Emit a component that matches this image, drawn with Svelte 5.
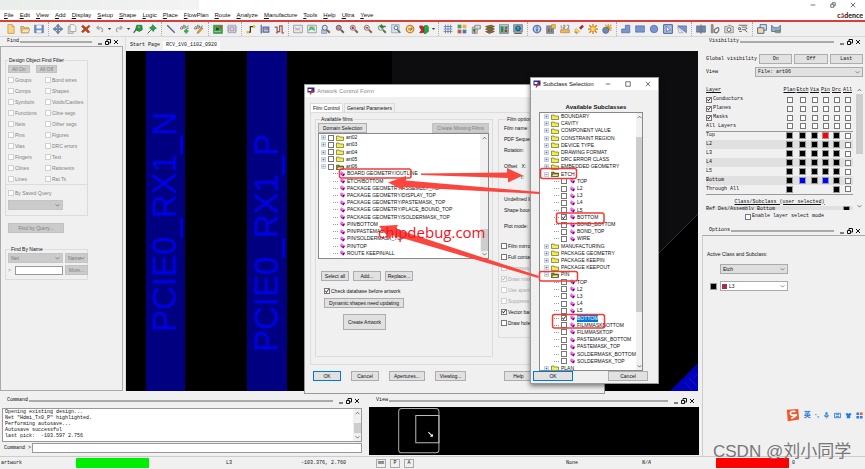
<script lang="ts">
	// Board editor workspace: docked panels round a board canvas,
	// with the artwork form and the subclass picker floating on top.

	type Shape = [d: string, fill: string, stroke?: string, width?: number];

	const menus = [
		'File', 'Edit', 'View', 'Add', 'Display', 'Setup', 'Shape', 'Logic', 'Place', 'FlowPlan',
		'Route', 'Analyze', 'Manufacture', 'Tools', 'Help', 'Ultra', 'Yeve',
	];

	const lens = 'M2 6a4 4 0 1 0 8 0a4 4 0 1 0-8 0';
	const handle = 'M9.500 9.500l4.500 4.500';

	// All icons live on a 16x16 grid.
	const icons: Record<string, Shape[]> = {
		new: [['M3 1h7l3 3v11H3z', '#f8d489', '#b88432'], ['M10 1v3h3', '#fff', '#b88432']],
		open: [['M1 4h5l1 2h7v8H2z', '#eec073', '#ac7a38'], ['M4 8h12l-3 6H2z', '#fde6b4', '#b48244']],
		save: [['M1 2h14v12H1z', '#7490c8', '#46659c'], ['M4 2h8v5H4zM4 10h8v4H4z', '#f4f7fc', 'none']],
		move: [['M8 0l3 4H9v3h3V5l4 3-4 3V9H9v3h2l-3 4-3-4h2V9H4v2L0 8l4-3v2h3V4H5z', '#6d8fb5', '#4f6f91']],
		copy: [['M2 4h8v11H2z', '#ddd', '#888'], ['M5 1h6l3 3v8H5z', '#f6f6f6', '#888']],
		delete: [['M3 2l5 4 5-4 1 2-4 4 4 5-3 1-4-4-4 4-2-2 4-4-4-4z', '#c4461c', '#8b3013']],
		undo: [['M6 3L3 6l4 3M3 6h6q4 1 3 5l-2 2', 'none', '#aaa', 2]],
		redo: [['M10 3l3 3-4 3M13 6H7q-4 1-3 5l2 2', 'none', '#aaa', 2]],
		ball: [['M6 2h8l1 7-5 3-6-3z', '#259b42', '#126428'], ['M5 9l-4 5', 'none', '#555', 2], ['M8 4h3v2H8z', '#7ce07f']],
		pin: [['M9 1l6 6-3 1-2 4-6-6 4-2z', '#2aa14c', '#1b7235'], ['M6 10l-5 5', 'none', '#555', 1.500]],
		line: [['M2 2l12 12', 'none', '#4d5c91', 2]],
		textAdd: [['M1 6q3-5 3 0v2H1V6M6 1v6q4 0 3-4H6M14 3q-4 0-3 4h3', 'none', '#444', 1], ['M10 8v7M6.500 11.500h7', 'none', '#36a74b', 3]],
		textEdit: [['M1 6q3-5 3 0v2H1V6M6 1v6q4 0 3-4H6M14 3q-4 0-3 4h3', 'none', '#444', 1], ['M14 7l-6 7-3 1 1-3 5-6z', '#eda43e', '#9d6321']],
		place: [['M1 2h14v13H1z', '#40aa4a', '#22772d'], ['M5 6h4v4H5z', '#333'], ['M10 3h4v4h-4z', '#d84335'], ['M2 12h11', 'none', '#aee3ac']],
		chip: [['M2 2h12v12H2z', '#cfdded', '#7187a5'], ['M5 5h6v6H5z', '#f2c9c9', '#a86f76'], ['M0 5h2M0 8h2M0 11h2M14 5h2M14 8h2M14 11h2', 'none', '#7187a5']],
		route: [['M3 13h4V4h6', 'none', '#333', 2], ['M1 11h4v4H1zM11 2h4v4h-4z', '#e7bb34']],
		slide: [['M2 1v14M5 5h9v8H5z', '#b8c6df', '#526ba3', 2], ['M7 8h6', 'none', '#bb5458', 2]],
		delay: [['M1 5h4v7h4V3h4v11h3', 'none', '#9c5959', 2], ['M3 14h4', 'none', '#777', 2]],
		unrats: [['M1 2h14v12H1z', '#eee', '#667896'], ['M3 5l9 7M4 11l8-6M3 8h9', 'none', '#c48f8f']],
		rats: [['M1 2h14v12H1z', '#e7f1e5', '#667896'], ['M3 11l4-6 5 6M4 5h8M3 8h10', 'none', '#3c9e50', 1.500]],
		zoomBox: [['M1 9h8v6H1z', '#b5c6df', '#6782af'], [lens, '#d8e5f5', '#50607c', 1.500], [handle, 'none', '#845c48', 3]],
		zoomFit: [[lens, '#b78c9c', '#7c5268', 1.500], [handle, 'none', '#665555', 3]],
		zoomIn: [[lens, '#efdbe2', '#777', 1.500], [handle, 'none', '#845c48', 3], ['M6 4v4M4 6h4', 'none', '#b72338', 2]],
		zoomOut: [[lens, '#f4e1e4', '#777', 1.500], [handle, 'none', '#845c48', 3], ['M4 6h4', 'none', '#b72338', 2]],
		zoomPrev: [[lens, '#d9ecdb', '#779077', 1.500], [handle, 'none', '#6a6358', 3], ['M14 4H6l2-3M6 4l3 3', 'none', '#258339', 2.500]],
		zoomPage: [['M1 1h12v13H1z', '#d4e2ee', '#7896b0'], ['M5 6a3 3 0 1 0 6 0a3 3 0 1 0-6 0', '#f4faff', '#4d6e8b', 1.500], ['M10 9l5 5', 'none', '#555', 2]],
		refresh: [['M2 8a6 6 0 1 0 12 0a6 6 0 1 0-12 0', '#f7d8a0', '#c77f27', 2], ['M5 8h6V5M11 8l-3 3', 'none', '#a25b16', 1.500]],
		view3d: [['M1 3h4l3 2v8l-3 1H1l3-4-2-3z', '#cf2128', '#8b1018'], ['M8 3l5-1 2 3v7l-4 3H8z', '#29a447', '#13742c']],
		grid: [['M1 4h14M1 8h14M1 12h14M4 1v14M8 1v14M12 1v14', 'none', '#7488b3', 1.500]],
		colors: [['M1 1h6v6H1z', '#43a355'], ['M9 1h6v6H9z', '#e6b54a'], ['M1 9h6v6H1z', '#c75a46'], ['M9 9h6v6H9z', '#4f78b4']],
		shadow: [['M2 5h8v10H2z', '#c7d5e5', '#666'], ['M6 2h9v6H6z', '#d4d4d4', '#666'], ['M3 8h4v3H3z', '#258d38'], ['M4 11h3v3H4z', '#b8352d']],
		layers: [['M1 12l9-2 5 2-8 3zM1 8l9-2 5 2-8 3zM1 4l9-2 5 2-8 3z', '#4d8b49', '#8b4c32', 1.500]],
		board: [['M1 1h14v14H1z', '#9baebd', '#526578'], ['M3 4h4v9H3zM10 4h3v4h-3z', '#2a8c3d'], ['M9 9h4v4H9z', '#a83b30'], ['M2 2h12', 'none', '#eee']],
		globe: [['M1 1h14v12H1z', '#93a5bd', '#53657c'], ['M4 7a4 4 0 1 0 8 0a4 4 0 1 0-8 0', '#236f9c', '#174e76'], ['M6 5h4l-2 4z', '#54bb65'], ['M2 15h12', 'none', '#666', 2]],
		info: [['M2 8a6 6 0 1 0 12 0a6 6 0 1 0-12 0', '#b5c8ea', '#5c75a6', 2], ['M8 4v2M8 7v5', 'none', '#385692', 2]],
		property: [['M1 3h11v12H1z', '#8398ae', '#566878'], ['M9 1h6v6H9z', '#f5c341', '#b28124'], ['M3 7h3v6H3z', '#ba4c43'], ['M8 8h2v5H8z', '#308d44']],
		measure: [['M1 9h14v5H1z', '#edb663', '#b87a2f'], ['M2 2v5M5 2h3v3H5v2h3M11 2h3v5h-3', 'none', '#555']],
		highlight: [['M8 6l5-5 3 3-5 5z', '#9b3440'], ['M4 7l5 5-3 2-5-5z', '#f9de6c', '#c69a31'], ['M1 12l4 3', 'none', '#ad7d35', 2]],
		sun: [['M8 0v16M0 8h16M2 2l12 12M14 2L2 14', 'none', '#d27a25', 2], ['M4 8a4 4 0 1 0 8 0a4 4 0 1 0-8 0', '#fcda54', '#c48a25']],
		shade: [['M10 0v12M4 6h12M5 1l10 10M15 1L5 11', 'none', '#e39a28', 2], ['M1 10a5 5 0 1 0 10 0a5 5 0 1 0-10 0', '#7187ac', '#455d83']],
		poly: [['M7 2h7v12H1V8h6z', '#7997ce', '#405f9a']],
		rect: [['M1 3h14v10H1z', '#7997ce', '#405f9a']],
		circle: [['M2 8a6 6 0 1 0 12 0a6 6 0 1 0-12 0', '#7997ce', '#405f9a']],
		select: [['M1 1h14v14H1z', '#a7bbdf', '#405f9a', 1.500], ['M5 3l7 7-4 0-2 3z', '#fff', '#405f9a']],
		voidShape: [['M1 3h14v11z', '#7997ce', '#405f9a'], ['M1 5l9 9H3z', '#eee', '#999']],
		mirror: [['M1 3h5v10H1zM10 3h5v10h-5z', '#708bb8', '#435d8a'], ['M8 1v14', 'none', '#444', 2]],
		spin: [['M2 1h3v13H2z', '#999', '#666'], ['M7 9q8-7 7 1-2 6-7 3z', 'none', '#777', 2]],
		camera: [['M1 4h4l2-2h4l1 2h3v10H1z', '#d3d3d3', '#777'], ['M5 9a3 3 0 1 0 6 0a3 3 0 1 0-6 0', '#fff', '#666', 1.500]],
		netlist: [['M1 2h14M6 5h8M6 9h4M10 9l5-2M10 9l5 4M1 6h3v3H1zM2 12h4', 'none', '#666', 1.500]],
		cascade: [['M5 1h10v9H5z', '#dbe5f4', '#48659a', 1.500], ['M1 6h10v9H1z', '#f3d896', '#48659a', 1.500]],
		compare: [['M1 2v10h14V2l-4 4H5z', '#9cb0d2', '#58749d', 1.500], ['M7 10h8v4H7z', '#65a96d', '#777']],
	};

	// 'caret' is the small arrow beside a split button.
	const toolGroups = [
		['new', 'open', 'save'],
		['move', 'copy', 'delete', 'undo', 'caret', 'redo', 'caret', 'ball', 'pin'],
		['line', 'textAdd', 'textEdit'],
		['place', 'chip'],
		['route', 'slide', 'delay'],
		['unrats', 'rats', 'zoomBox', 'zoomFit', 'zoomIn', 'zoomOut', 'zoomPrev', 'zoomPage', 'refresh', 'view3d', 'caret'],
		['grid', 'colors', 'shadow', 'layers', 'board', 'globe'],
		['info', 'property', 'measure', 'highlight', 'sun', 'shade'],
		['poly', 'rect', 'circle', 'select', 'voidShape'],
		['mirror', 'spin', 'camera', 'netlist'],
		['cascade', 'compare'],
	];

	const findTypes = [
		'Groups', 'Bond wires', 'Comps', 'Shapes', 'Symbols', 'Voids/Cavities', 'Functions', 'Cline segs',
		'Nets', 'Other segs', 'Pins', 'Figures', 'Vias', 'DRC errors', 'Fingers', 'Text',
		'Clines', 'Ratsnests', 'Lines', 'Rat Ts',
	];

	const films = ['art02', 'art03', 'art04', 'art05', 'art06'];
	const filmItems = [
		'BOARD GEOMETRY/OUTLINE', 'ETCH/BOTTOM', 'PACKAGE GEOMETRY/ASSEMBLY_TOP',
		'PACKAGE GEOMETRY/DISPLAY_TOP', 'PACKAGE GEOMETRY/PASTEMASK_TOP',
		'PACKAGE GEOMETRY/PLACE_BOUND_TOP', 'PACKAGE GEOMETRY/SOLDERMASK_TOP', 'PIN/BOTTOM',
		'PIN/PASTEMASK_TOP', 'PIN/SOLDERMASK_TOP', 'PIN/TOP', 'ROUTE KEEPIN/ALL',
	];

	const classes = [
		{ name: 'BOUNDARY' }, { name: 'CAVITY' }, { name: 'COMPONENT VALUE' }, { name: 'CONSTRAINT REGION' },
		{ name: 'DEVICE TYPE' }, { name: 'DRAWING FORMAT' }, { name: 'DRC ERROR CLASS' }, { name: 'EMBEDDED GEOMETRY' },
		{ name: 'ETCH', subs: ['TOP', 'L2', 'L3', 'L4', 'L5', 'BOTTOM', 'BOND_BOTTOM', 'BOND_TOP', 'WIRE'] },
		{ name: 'MANUFACTURING' }, { name: 'PACKAGE GEOMETRY' }, { name: 'PACKAGE KEEPIN' }, { name: 'PACKAGE KEEPOUT' },
		{
			name: 'PIN',
			subs: [
				'TOP', 'L2', 'L3', 'L4', 'L5', 'BOTTOM', 'FILMMASKBOTTOM', 'FILMMASKTOP',
				'PASTEMASK_BOTTOM', 'PASTEMASK_TOP', 'SOLDERMASK_BOTTOM', 'SOLDERMASK_TOP',
			],
		},
		{ name: 'PLAN' },
	];

	const filmChecks = [
		{ label: 'Film mirrored' },
		{ label: 'Full contact thermal-reliefs' },
		{ label: 'Suppress unconnected pads', off: true },
		{ label: 'Draw missing pad apertures', on: true, off: true },
		{ label: 'Use aperture rotation', off: true },
		{ label: 'Suppress shape fill', off: true },
		{ label: 'Vector based pad behavior', on: true },
		{ label: 'Draw holes only' },
	];

	const columns = ['Plan', 'Etch', 'Via', 'Pin', 'Drc', 'All'];
	const k = 'black';
	const layers = [
		{ name: 'Top', cells: [k, k, k, 'red', k] },
		{ name: 'L2', cells: [k, k, k, k, k] },
		{ name: 'L3', cells: [k, k, k, k, k] },
		{ name: 'L4', cells: [k, k, k, k, k] },
		{ name: 'L5', cells: [k, k, k, k, k] },
		{ name: 'Bottom', cells: [k, 'blue', k, 'blue', k] },
		{ name: 'Through All', cells: [k, '', '', '', k] },
	];
</script>

{#snippet dockTitle(name: string)}
	<header class="dock-title">
		<span>{name}</span><i class="rule"></i>
		<button aria-label="Minimize {name}"><svg viewBox="0 0 6 6"><path d="M1 5h4" /></svg></button>
		<button aria-label="Float {name}"><svg viewBox="0 0 6 6"><path d="M2 2V0.500h3.500V4H4M0.500 2.500h3v3h-3z" /></svg></button>
		<button aria-label="Close {name}"><svg viewBox="0 0 6 6"><path d="M1 1l4 4M5 1L1 5" /></svg></button>
	</header>
{/snippet}

{#snippet appIcon()}
	<svg class="app-icon" viewBox="0 0 16 16">
		<path d="M1 1h14v10H1z" fill="#20308c" />
		<path d="M3 4h6v4H3z" fill="#fff" />
		<path d="M5 15l3-8 6-3-3 4 3 2-5 2-1 3z" fill="#d9232c" />
	</svg>
{/snippet}

{#snippet expander(open: boolean)}
	<svg class="expander" viewBox="0 0 10 10">
		<path d="M1 1h8v8H1z" fill="#e7edf8" stroke="#98a6c0" />
		<path d={open ? 'M3 5h4' : 'M3 5h4M5 3v4'} stroke="#334d90" fill="none" />
	</svg>
{/snippet}

{#snippet folder(open: boolean)}
	<svg class="folder" viewBox="0 0 16 12">
		<path d="M1 2h5l1 2h8v7H1z" fill={open ? '#8a8a20' : '#f4ef4c'} stroke="#333300" />
		{#if open}<path d="M4 6h11.500l-2.500 5H1z" fill="#f4ef8c" stroke="#222" />{/if}
	</svg>
{/snippet}

{#snippet gem()}
	<svg class="gem" viewBox="0 0 10 12">
		<path d="M3 1l6 4v3L6 11 1 7V3z" fill="#c71fc9" />
		<path d="M3 1l6 4-3 2-5-3z" fill="#ef7df0" />
		<path d="M6 7v4l3-3V5z" fill="#541056" />
	</svg>
{/snippet}

<div class="app">
	<div class="titlebar">
		<i class="tint"></i>
		<div class="window-buttons">
			<button aria-label="Minimize"><svg viewBox="0 0 8 8"><path d="M1 4h6" /></svg></button>
			<button aria-label="Restore"><svg viewBox="0 0 8 8"><path d="M3 3V1h4v4H5M1 3h4v4H1z" /></svg></button>
			<button aria-label="Close"><svg viewBox="0 0 8 8"><path d="M1 1l6 6M7 1L1 7" /></svg></button>
		</div>
	</div>
	<nav class="menubar">
		{#each menus as menu}
			<button><u>{menu[0]}</u>{menu.slice(1)}</button>
		{/each}
		<strong class="brand">c<em>ā</em>dence</strong>
	</nav>

	<div class="toolbar">
		{#each toolGroups as group}
			<div class="tool-group">
				{#each group as name}
					{#if name === 'caret'}
						<button class="caret" aria-label="More"></button>
					{:else}
						<button class="tool" aria-label={name}>
							<svg viewBox="0 0 16 16">
								{#each icons[name] as [d, fill, stroke, width]}
									<path {d} {fill} stroke={stroke ?? 'none'} stroke-width={width ?? 1} />
								{/each}
							</svg>
						</button>
					{/if}
				{/each}
			</div>
		{/each}
	</div>

	<main class="workspace">
		<div class="center">
			<div class="upper">
				<section class="find">
					{@render dockTitle('Find')}
					<div class="find-body">
						<fieldset class="filter">
							<legend>Design Object Find Filter</legend>
							<div class="row"><button class="btn gray" disabled>All On</button><button class="btn gray" disabled>All Off</button></div>
							<div class="types">
								{#each findTypes as type}
									<label><input type="checkbox" disabled />{type}</label>
								{/each}
							</div>
							<div class="saved">
								<label><input type="checkbox" disabled />By Saved Query</label>
								<select class="gray wide" aria-label="Saved query" disabled><option></option></select>
							</div>
						</fieldset>
						<button class="btn gray query" disabled>Find by Query...</button>
						<fieldset class="by-name">
							<legend>Find By Name</legend>
							<select class="gray" aria-label="Object kind" disabled><option>Net</option></select>
							<select class="gray" aria-label="Match by" disabled><option>Name</option></select>
							<label class="name-input">&gt;<input type="text" disabled /></label>
							<button class="btn gray" disabled>More...</button>
						</fieldset>
					</div>
				</section>

				<section class="editor">
					<div class="tabs">
						<button>Start Page</button>
						<button class="active">RCV_1V0_1102_0920</button>
					</div>
					<svg class="board" viewBox="0 0 572 340" preserveAspectRatio="xMinYMin slice">
						<path d="M0 0h572v340H0z" fill="#000" />
						<path d="M266 0H572V163L480 255H266z" fill="#0d0c0f" />
						<path d="M572 163L480 255" stroke="#333" />
						<path d="M20 0h39v340H20zM121 0h40v340h-40z" fill="#000080" />
						<path d="M572 312v28h-28z" fill="#0000b4" />
						<path d="M559 331l7 8M563 327l8 8M567 327l5-4" stroke="#1010ff" />
						<text transform="translate(50 281) rotate(-90)">PCIE0_RX1_N</text>
						<text transform="translate(152 301) rotate(-90)">PCIE0_RX1_P</text>
					</svg>
				</section>
			</div>

			<div class="lower">
				<section class="command">
					{@render dockTitle('Command')}
					<div class="log">
						<pre>Opening existing design...
Net "Hdmi_Tx0_P" highlighted.
Performing autosave...
Autosave successful
last pick:  -103.597 2.756</pre>
						<i class="scroll log-scroll"></i>
					</div>
					<label class="prompt">Command &gt;<input type="text" /></label>
				</section>
				<section class="world">
					{@render dockTitle('View')}
					<svg class="overview" viewBox="0 0 328 48" preserveAspectRatio="xMinYMin slice">
						<path d="M0 0h328v48H0z" fill="#000" />
						<rect x="29.500" y="1.500" width="40" height="44" rx="3" fill="none" stroke="#aaa" />
						<path d="M46.500 8.500h23v27h-23z" fill="none" stroke="#bbb" />
						<path d="M59 25l4 4m0-2v2h-2" fill="none" stroke="#fff" />
					</svg>
				</section>
			</div>
		</div>

		<aside class="dock">
			<section>
				{@render dockTitle('Visibility')}
				<div class="visibility">
					<div class="vis-row">
						<span>Global visibility</span>
						<button class="btn">On</button><button class="btn">Off</button><button class="btn">Last</button>
					</div>
					<div class="vis-row view-row">
						<label for="view-file">View</label>
						<select id="view-file"><option>File: art06</option></select>
					</div>
					<div class="layer-area">
						<div class="layer-list">
							<table>
								<thead>
									<tr><th>Layer</th>{#each columns as column}<th>{column}</th>{/each}</tr>
								</thead>
								<tbody>
									{#each ['Conductors', 'Planes', 'Masks', 'All Layers'] as name}
										<tr>
											<td>
												{#if name === 'All Layers'}{name}{:else}
													<label><input type="checkbox" checked />{name}</label>
												{/if}
											</td>
											{#each columns as column}
												<td><input type="checkbox" aria-label="{name} {column}" /></td>
											{/each}
										</tr>
									{/each}
								</tbody>
								<tbody class="stack">
									{#each layers as layer}
										<tr>
											<td>{layer.name}</td>
											{#each layer.cells as cell}
												<td>{#if cell}<i class="swatch {cell}"></i>{/if}</td>
											{/each}
											<td><input type="checkbox" aria-label="{layer.name} all" /></td>
										</tr>
									{/each}
								</tbody>
							</table>
							<p class="class-title">Class/Subclass (user selected)</p>
							<p class="class-row">Ref Des/Assembly_Bottom<i class="swatch black"></i></p>
						</div>
						<i class="scroll layer-scroll"></i>
					</div>
					<label class="enable"><input type="checkbox" />Enable layer select mode</label>
				</div>
			</section>
			<section class="options">
				{@render dockTitle('Options')}
				<div class="options-body">
					<p>Active Class and Subclass:</p>
					<select class="gray" aria-label="Active class"><option>Etch</option></select>
					<div class="subclass">
						<i class="swatch black"></i>
						<span class="chosen"><i></i><select aria-label="Active subclass"><option>L3</option></select></span>
					</div>
				</div>
			</section>
		</aside>
	</main>

	<footer class="status">
		<span>artwork</span>
		<i class="busy"></i>
		<span>L3</span>
		<span>-103.376, 2.760</span>
		<span class="keys"><button>mm</button><button>P</button><button>A</button></span>
		<span>None</span>
		<span class="na">N/A</span>
		<i class="drc"></i>
		<span>0</span>
	</footer>

	<div class="window artwork" role="dialog" aria-label="Artwork Control Form">
		<div class="window-title">{@render appIcon()}<span>Artwork Control Form</span></div>
		<div class="artwork-body">
			<div class="form-tabs"><button class="active">Film Control</button><button>General Parameters</button></div>
			<div class="form-page">
				<fieldset class="films">
					<legend>Available films</legend>
					<div class="row spread">
						<button class="btn">Domain Selection</button>
						<button class="btn gray" disabled>Create Missing Films</button>
					</div>
					<div class="tree film-tree">
						<ul>
							{#each films as film}
								<li>
									{@render expander(film === 'art06')}
									<input type="checkbox" aria-label={film} />
									{@render folder(film === 'art06')}<span>{film}</span>
								</li>
							{/each}
							{#each filmItems as item}
								<li class="leaf"><i class="branch"></i>{@render gem()}<span>{item}</span></li>
							{/each}
						</ul>
						<i class="scroll film-scroll"></i>
					</div>
					<div class="row actions">
						<button class="btn">Select all</button><button class="btn">Add...</button><button class="btn">Replace...</button>
					</div>
					<label class="check-db"><input type="checkbox" checked />Check database before artwork</label>
					<button class="btn dynamic">Dynamic shapes need updating</button>
					<button class="btn create">Create Artwork</button>
				</fieldset>
				<fieldset class="film-options">
					<legend>Film options</legend>
					<p>Film name:</p>
					<p>PDF Sequence:</p>
					<p>Rotation:</p>
					<p class="apart">Offset&nbsp;&nbsp; X:</p>
					<p class="indent">Y:</p>
					<p class="apart next">Undefined line width:</p>
					<p>Shape bounding box:</p>
					<p class="apart">Plot mode:</p>
					<div class="film-checks">
						{#each filmChecks as check}
							<label class:off={check.off}><input type="checkbox" checked={check.on} disabled={check.off} />{check.label}</label>
						{/each}
					</div>
				</fieldset>
			</div>
			<div class="row form-footer">
				<button class="btn primary">OK</button><button class="btn">Cancel</button>
				<button class="btn">Apertures...</button><button class="btn">Viewlog...</button>
				<button class="btn help">Help</button>
			</div>
		</div>
	</div>

	<div class="window picker" role="dialog" aria-label="Subclass Selection">
		<div class="window-title">
			{@render appIcon()}<span>Subclass Selection</span>
			<div class="window-buttons">
				<button aria-label="Minimize"><svg viewBox="0 0 8 8"><path d="M1 4h6" /></svg></button>
				<button aria-label="Maximize"><svg viewBox="0 0 8 8"><path d="M1 1h6v6H1z" /></svg></button>
				<button aria-label="Close"><svg viewBox="0 0 8 8"><path d="M1 1l6 6M7 1L1 7" /></svg></button>
			</div>
		</div>
		<div class="picker-body">
			<h2>Available Subclasses</h2>
			<div class="tree class-tree">
				<ul>
					{#each classes as cls}
						<li>{@render expander(!!cls.subs)}{@render folder(!!cls.subs)}<span>{cls.name}</span></li>
						{#each cls.subs ?? [] as sub}
							<li class="leaf">
								<i class="branch"></i>
								<input type="checkbox" class="tick" aria-label="{cls.name} {sub}" checked={sub === 'BOTTOM'} />
								{@render gem()}
								<span class:selected={cls.name === 'PIN' && sub === 'BOTTOM'}>{sub}</span>
							</li>
						{/each}
					{/each}
				</ul>
				<i class="scroll class-scroll"></i>
			</div>
			<div class="row spread"><button class="btn primary">OK</button><button class="btn">Cancel</button></div>
		</div>
	</div>

	<div class="ime">
		<svg viewBox="0 0 16 16"><path d="M1 2l13-1 1 12-13 2z" fill="#f2572c" /><path d="M11 4q-6-1-6 2t5 2-4 4" fill="none" stroke="#fff" stroke-width="2" /></svg>
		<span>英</span><span>·,</span>
		<svg viewBox="0 0 16 16"><path d="M6 1h4v8H6zM3 7q0 5 5 5t5-5M8 12v4" fill="#2a7be0" fill-opacity="0.800" stroke="#2a7be0" /></svg>
		<svg viewBox="0 0 16 16"><path d="M1 3h14v10H1zM4 6h8M4 10h8" fill="none" stroke="#2a7be0" stroke-width="2" /></svg>
		<svg viewBox="0 0 16 16"><path d="M1 4l4-2 3 2 3-2 4 2-2 4-1-1v7H4V7L3 8z" fill="#2a7be0" /></svg>
		<svg viewBox="0 0 16 16"><path d="M1 1h6v6H1zM1 9h6v6H1zM9 9h6v6H9z" fill="#2a7be0" /><path d="M9 1h6v6H9z" fill="#f2572c" /></svg>
	</div>

	<!-- Hand-drawn notes linking the films to their subclasses -->
	<svg class="notes" width="865" height="469" viewBox="0 0 865 469">
		<g fill="none" stroke="#f23a35" stroke-width="1.500">
			<rect x="339.500" y="169" width="71.500" height="9" rx="2" />
			<rect x="540.500" y="168.500" width="36" height="10" rx="2" />
			<rect x="556.500" y="213" width="47.500" height="10.500" rx="2" />
			<rect x="539.500" y="271.500" width="38" height="9.500" rx="2" />
			<rect x="552.500" y="314.500" width="52" height="13.500" rx="2" />
		</g>
		<g fill="#fb4640">
			<path d="M421 173.500L507 172.500V168L523 175.500 508 182.500V178L421 175z" />
			<path d="M540 192L406 180.500V176L388 182.500 403 190V187L540 194z" />
			<path d="M539 276L396 229 398 225 379 226 390 239 392 235 538 278z" />
		</g>
		<text x="378" y="238" fill="#f5121b" class="site">chipdebug.com</text>
		<text x="713" y="457" class="mark">CSDN @刘小同学</text>
	</svg>
</div>

<style>
	:global(body) {
		margin: 0;
	}

	.app {
		--ui: 'Liberation Sans', sans-serif;
		--mono: 'Liberation Mono', monospace;
		position: relative;
		display: flex;
		flex-direction: column;
		min-height: 100vh;
		overflow: hidden;
		background: #f0f0f0;
		color: #111;
		font: 5px/8px var(--ui);
	}

	.app *,
	.app *::before {
		box-sizing: border-box;
	}

	button,
	input,
	select {
		margin: 0;
		padding: 0;
		border: 0;
		border-radius: 0;
		background: none;
		color: inherit;
		font: inherit;
	}

	p,
	ul,
	pre,
	h2,
	fieldset {
		margin: 0;
		padding: 0;
	}

	svg {
		display: block;
	}

	label {
		display: flex;
		align-items: center;
		gap: 1px;
		white-space: nowrap;
	}

	input[type='checkbox'] {
		appearance: none;
		flex: none;
		width: 6px;
		height: 6px;
		border: 1px solid #777;
		background: #fff;
	}

	input[type='checkbox']:disabled {
		border-color: #d0d0d0;
	}

	input[type='checkbox']:checked::before {
		content: '';
		display: block;
		width: 4px;
		height: 4px;
		background: #222;
		clip-path: polygon(0 50%, 35% 100%, 100% 10%, 85% 0, 35% 70%, 10% 35%);
	}

	input[type='checkbox']:disabled:checked::before {
		background: #aaa;
	}

	input[type='text'] {
		min-width: 0;
		border: 1px solid #999;
		background: #fff;
	}

	select {
		appearance: none;
		height: 10px;
		padding: 0 2px;
		border: 1px solid #aaa;
		background: #fff url("data:image/svg+xml,%3Csvg xmlns='http://www.w3.org/2000/svg' viewBox='0 0 8 8'%3E%3Cpath d='M1 2l3 3 3-3' fill='none' stroke='%23555'/%3E%3C/svg%3E") no-repeat right 2px center / 5px 5px;
	}

	select.gray {
		background-color: #dedede;
	}

	select:disabled {
		border-color: #c4c4c4;
		color: #777;
		opacity: 1;
	}

	.find select.gray {
		background-color: #cbcbcb;
	}

	.btn {
		height: 10px;
		padding: 0 4px;
		border: 1px solid #adadad;
		background: #e1e1e1;
		line-height: 8px;
		white-space: nowrap;
	}

	.btn.gray {
		border-color: #c2c2c2;
		background: #cbcbcb;
		color: #808080;
	}

	.btn.primary {
		border-color: #0078d7;
	}

	.row {
		display: flex;
	}

	.spread {
		justify-content: space-between;
	}

	fieldset {
		min-width: 0;
		border: 1px solid #dcdcdc;
	}

	legend {
		margin-left: 2px;
		padding: 0 1px;
		line-height: 6px;
	}

	.titlebar {
		display: flex;
		justify-content: space-between;
		height: 10px;
		background: #fff;
	}

	.tint {
		width: 23%;
		background: linear-gradient(90deg, #e9eeea, #f3f3f3);
	}

	.window-buttons {
		display: flex;
	}

	.window-buttons button {
		display: grid;
		place-items: center;
		width: 20px;
	}

	.window-buttons svg {
		width: 6px;
		height: 6px;
		fill: none;
		stroke: #444;
	}

	.titlebar .window-buttons {
		margin-right: 2px;
	}

	.menubar {
		display: flex;
		align-items: center;
		gap: 6px;
		height: 10px;
		padding: 0 2px 0 4px;
		background: #fff;
		font-size: 6px;
	}

	.brand {
		margin-left: auto;
		font: bold 7px/8px Lato, sans-serif;
	}

	.brand em {
		color: #d22;
		font-style: normal;
	}

	.toolbar {
		display: flex;
		height: 17px;
		padding-left: 3px;
		border-top: 2px solid #dc3c38;
		border-bottom: 1px solid #d8d8d8;
		background: #f0f0f0;
	}

	.tool-group {
		display: flex;
		align-items: center;
		padding-left: 1px;
	}

	.tool-group + .tool-group {
		margin-left: 2px;
		padding-left: 2px;
		border-left: 1px dotted #aaa;
	}

	.tool {
		display: grid;
		place-items: center;
		width: 14px;
		height: 12px;
	}

	.tool svg {
		width: 10px;
		height: 10px;
	}

	.caret {
		width: 5px;
		height: 2px;
		background: #444;
		clip-path: polygon(15% 0, 85% 0, 50% 100%);
	}

	.workspace {
		display: flex;
		flex: 1;
	}

	.center {
		display: flex;
		flex: 1;
		flex-direction: column;
		min-width: 0;
	}

	.upper {
		display: flex;
		flex: 1;
	}

	.dock-title {
		display: flex;
		align-items: center;
		gap: 1px;
		height: 9px;
		padding: 0 3px 0 7px;
		font: 5px/9px var(--mono);
	}

	.dock-title .rule {
		flex: 1;
		height: 2px;
		margin-right: 4px;
		border: solid #aaa;
		border-width: 1px 0;
	}

	.dock-title button {
		width: 7px;
	}

	.dock-title svg {
		width: 6px;
		height: 6px;
		fill: none;
		stroke: #111;
	}

	.find {
		display: flex;
		flex-direction: column;
		width: 126px;
		padding-right: 2px;
		border-right: 1px solid #ddd;
	}

	.find-body {
		flex: 1;
		padding: 10px 34px 0 4px;
		border: 1px solid #aaa;
		color: #808080;
	}

	.find-body legend {
		color: #111;
	}

	.filter > .row {
		gap: 6px;
		padding: 2px 2px 0;
	}

	.filter .btn {
		height: 8px;
		padding: 0 3px;
		line-height: 6px;
	}

	.types {
		display: grid;
		grid-template-columns: 37px 1fr;
		grid-auto-rows: 11px;
		padding: 1px 2px 0;
	}

	.saved {
		display: grid;
		gap: 3px;
		padding: 4px 2px 5px;
		border-top: 1px solid #dcdcdc;
	}

	.saved .wide {
		width: 55px;
	}

	.query {
		width: 56px;
		margin: 7px 0 13px 3px;
	}

	.by-name {
		display: grid;
		grid-template-columns: 55px 23px;
		gap: 2px;
		padding: 1px 2px 4px;
	}

	.by-name .btn {
		padding: 0 1px;
	}

	.name-input {
		gap: 4px;
	}

	.name-input input {
		flex: 1;
		height: 9px;
	}

	.editor {
		display: flex;
		flex: 1;
		flex-direction: column;
		min-width: 0;
		padding-right: 1px;
	}

	.tabs {
		display: flex;
		height: 14px;
		padding: 4px 0 1px 1px;
		font: 5px/9px var(--mono);
	}

	.tabs button {
		padding: 0 3px;
	}

	.tabs .active {
		background: #fff;
	}

	.board {
		flex: 1 1 0;
		width: 100%;
		min-height: 0;
	}

	.board text {
		fill: #0000e6;
		font: 33px 'Liberation Sans', sans-serif;
	}

	.lower {
		display: grid;
		grid-template-columns: 364px 1fr;
		gap: 5px;
		padding-top: 5px;
	}

	.command,
	.world {
		font: 5px/7px var(--mono);
	}

	.log {
		display: flex;
		justify-content: space-between;
		height: 34px;
		margin: 3px 2px 0;
		overflow: hidden;
		border: 1px solid #999;
		background: #fff;
	}

	.log pre {
		padding-left: 2px;
		font: 5px/6px var(--mono);
	}

	.scroll {
		position: relative;
		flex: none;
		width: 8px;
		background: #f0f0f0;
	}

	/* Arrow ends and thumb of a scrollbar */
	.scroll::before {
		content: '';
		display: block;
		height: 100%;
		background:
			url("data:image/svg+xml,%3Csvg xmlns='http://www.w3.org/2000/svg' viewBox='0 0 8 8'%3E%3Cpath d='M1 5l3-3 3 3' fill='none' stroke='%23333'/%3E%3C/svg%3E") no-repeat center 2px / 5px 5px,
			url("data:image/svg+xml,%3Csvg xmlns='http://www.w3.org/2000/svg' viewBox='0 0 8 8'%3E%3Cpath d='M1 2l3 3 3-3' fill='none' stroke='%23333'/%3E%3C/svg%3E") no-repeat center bottom 1px / 5px 5px,
			linear-gradient(#cdcdcd, #cdcdcd) no-repeat center var(--thumb-at) / 7px var(--thumb);
	}

	.log-scroll {
		--thumb: 10px;
		--thumb-at: 14px;
	}

	.film-scroll {
		--thumb: 22px;
		--thumb-at: 95px;
	}

	.class-scroll {
		--thumb: 175px;
		--thumb-at: 24px;
	}

	.layer-scroll {
		--thumb: 60px;
		--thumb-at: 8px;
	}

	.prompt {
		gap: 1px;
		padding: 1px 2px 3px 4px;
	}

	.prompt input {
		flex: 1;
		height: 10px;
	}

	.overview {
		width: 100%;
		height: 48px;
		margin-top: 2px;
	}

	.dock {
		display: flex;
		flex-direction: column;
		width: 166px;
		padding-left: 3px;
		font: 5px/7px var(--mono);
	}

	.visibility {
		padding: 8px 2px 0 4px;
	}

	.vis-row {
		display: grid;
		grid-template-columns: 51px repeat(3, 1fr);
		gap: 2px;
		align-items: center;
		white-space: nowrap;
	}

	.view-row {
		grid-template-columns: 47px 1fr;
		margin: 3px 0 9px;
	}

	.view-row select {
		background-color: #e1e1e1;
	}

	.layer-area {
		display: flex;
		height: 124px;
	}

	.layer-list {
		flex: 1;
		padding-right: 2px;
		overflow: hidden;
	}

	table {
		width: 100%;
		border-collapse: collapse;
		table-layout: fixed;
	}

	tr {
		height: 9px;
	}

	th,
	td {
		width: 11px;
		padding: 0;
		text-align: center;
		vertical-align: middle;
		line-height: 7px;
		white-space: nowrap;
	}

	th {
		font-weight: normal;
		text-decoration: underline;
	}

	th:first-child,
	td:first-child {
		width: auto;
		text-align: left;
	}

	th:nth-child(2),
	th:nth-child(3) {
		width: 13px;
	}

	td input,
	td .swatch {
		display: block;
		margin: 0 auto;
	}

	td label input {
		margin: 0;
	}

	.stack {
		border: solid #999;
		border-width: 1px 0;
	}

	.stack tr:nth-child(even) {
		background: #e0e0e0;
	}

	.swatch {
		display: block;
		width: 7px;
		height: 7px;
		border: 1px solid #999;
	}

	.black {
		background: #000;
	}

	.red {
		background: #f00;
	}

	.blue {
		background: #00f;
	}

	.class-title {
		margin-top: 4px;
		text-align: center;
		text-decoration: underline;
		white-space: nowrap;
	}

	.class-row {
		display: flex;
		justify-content: space-between;
		padding-right: 3px;
		background: #e0e0e0;
	}

	.enable {
		padding: 3px 0 6px 39px;
	}

	.options {
		display: flex;
		flex: 1;
		flex-direction: column;
	}

	.options-body {
		flex: 1;
		padding: 14px 4px;
		border-top: 1px solid #aaa;
		border-left: 1px solid #ccc;
	}

	.options-body p,
	.options-body select {
		font: 5px/8px var(--ui);
	}

	.options-body > select {
		display: block;
		width: 68px;
		margin: 6px 0 7px 13px;
	}

	.subclass {
		display: flex;
		align-items: center;
		gap: 3px;
		padding-left: 3px;
	}

	.chosen {
		display: flex;
		align-items: center;
		width: 68px;
		padding-left: 1px;
		border: 1px solid #aaa;
		background: #fff;
	}

	.chosen i {
		width: 5px;
		height: 5px;
		background: #a03050;
	}

	.chosen select {
		flex: 1;
		height: 8px;
		border: 0;
	}

	.status {
		display: grid;
		grid-template-columns: 75px 150px 75px 75px 190px 76px 74px 76px 1fr;
		align-items: center;
		height: 13px;
		padding-left: 1px;
		border-top: 1px solid #ccc;
		font: 5px/7px var(--mono);
	}

	.busy,
	.drc {
		width: 73px;
		height: 10px;
		background: #0e0;
	}

	.drc {
		background: #f00;
	}

	.keys {
		display: flex;
		gap: 4px;
	}

	.keys button {
		width: 10px;
		height: 9px;
		border: 1px solid #aaa;
		line-height: 7px;
	}

	.na {
		font-style: italic;
	}

	.window {
		position: absolute;
		border: 1px solid #999;
		background: #f0f0f0;
	}

	.window-title {
		display: flex;
		align-items: center;
		height: 12px;
		padding-left: 2px;
		gap: 2px;
		background: #fff;
		font-size: 6px;
	}

	.window-title .window-buttons {
		margin-left: auto;
	}

	.app-icon {
		width: 8px;
		height: 8px;
	}

	.artwork {
		top: 84px;
		left: 304px;
		width: 301px;
	}

	.artwork .window-title {
		color: #888;
	}

	.artwork-body {
		padding: 6px 5px 2px;
	}

	.form-tabs {
		display: flex;
		gap: 1px;
	}

	.form-tabs button {
		height: 9px;
		padding: 0 2px;
		border: 1px solid #dcdcdc;
		border-bottom: 0;
		line-height: 8px;
	}

	.form-tabs .active {
		background: #fff;
	}

	.form-page {
		display: grid;
		grid-template-columns: 178px 1fr;
		gap: 5px;
		align-items: start;
		padding: 3px 0 7px 4px;
		border: 1px solid #dcdcdc;
	}

	.films {
		padding: 1px 3px 26px 2px;
	}

	.tree {
		display: flex;
		justify-content: space-between;
		overflow: hidden;
		border: 1px solid #888;
		background: #fff;
	}

	.tree ul {
		display: grid;
		grid-auto-rows: 1fr;
		flex: 1;
		list-style: none;
	}

	.tree li {
		display: flex;
		align-items: center;
		gap: 2px;
		min-height: 0;
		padding-left: 2px;
		line-height: 7px;
		white-space: nowrap;
	}

	.film-tree {
		height: 126px;
	}

	.film-tree ul {
		height: 123px;
	}

	.expander {
		width: 5px;
		height: 5px;
	}

	.folder {
		width: 8px;
		height: 6px;
	}

	.gem {
		width: 5px;
		height: 6px;
	}

	.branch {
		width: 5px;
		border-top: 1px dotted #999;
	}

	.tree .leaf {
		padding-left: 14px;
	}

	.actions {
		gap: 4px;
		padding: 12px 0 6px 3px;
	}

	.actions .btn {
		width: 28px;
		padding: 0;
	}

	.check-db {
		padding-left: 6px;
	}

	.dynamic,
	.create {
		display: block;
		margin: 3px 0 6px 6px;
	}

	.create {
		height: 16px;
		margin: 0 0 0 25px;
	}

	.film-options {
		height: 222px;
		padding: 2px 0 0 5px;
		overflow: hidden;
		white-space: nowrap;
	}

	.film-options p {
		height: 11px;
	}

	.film-options .apart {
		margin-top: 5px;
	}

	.film-options .next {
		margin-top: 11px;
	}

	.film-options .indent {
		padding-left: 16px;
	}

	.film-checks {
		display: grid;
		grid-auto-rows: 11px;
		margin: 7px 0 0 -3px;
	}

	.off {
		color: #aaa;
	}

	.form-footer {
		gap: 10px;
		padding: 6px 0 10px 3px;
	}

	.form-footer .btn {
		min-width: 28px;
	}

	.form-footer .help {
		margin-left: 28px;
	}

	.picker {
		top: 77px;
		left: 530px;
		width: 129px;
		box-shadow: 0 2px 5px #0008;
	}

	.picker-body {
		padding: 13px 10px 2px 2px;
	}

	.picker h2 {
		padding-left: 11px;
		font: bold 6px/8px var(--ui);
		text-align: center;
	}

	.class-tree {
		height: 259px;
		margin: 1px 5px 0 6px;
	}

	.class-tree ul {
		height: 259px;
	}

	.class-tree li:not(.leaf) {
		padding-left: 4px;
	}

	.tick {
		margin-right: 1px;
	}

	.selected {
		background: #0078d7;
		color: #fff;
	}

	.picker .btn {
		width: 40px;
	}

	.ime {
		position: absolute;
		top: 408px;
		right: 2px;
		display: flex;
		align-items: center;
		gap: 4px;
		height: 14px;
		color: #2a7be0;
		font: bold 7px/14px 'Liberation Sans', 'Noto Sans CJK SC', sans-serif;
	}

	.ime svg {
		width: 7px;
		height: 7px;
	}

	.ime svg:first-child {
		width: 14px;
		height: 14px;
	}

	.notes {
		position: absolute;
		top: 0;
		left: 0;
		pointer-events: none;
	}

	.site {
		font: 15px 'Comic Sans MS', 'Open Sans', sans-serif;
	}

	.mark {
		fill: #777;
		font: 17px 'Liberation Sans', 'Noto Sans CJK SC', sans-serif;
	}
</style>
